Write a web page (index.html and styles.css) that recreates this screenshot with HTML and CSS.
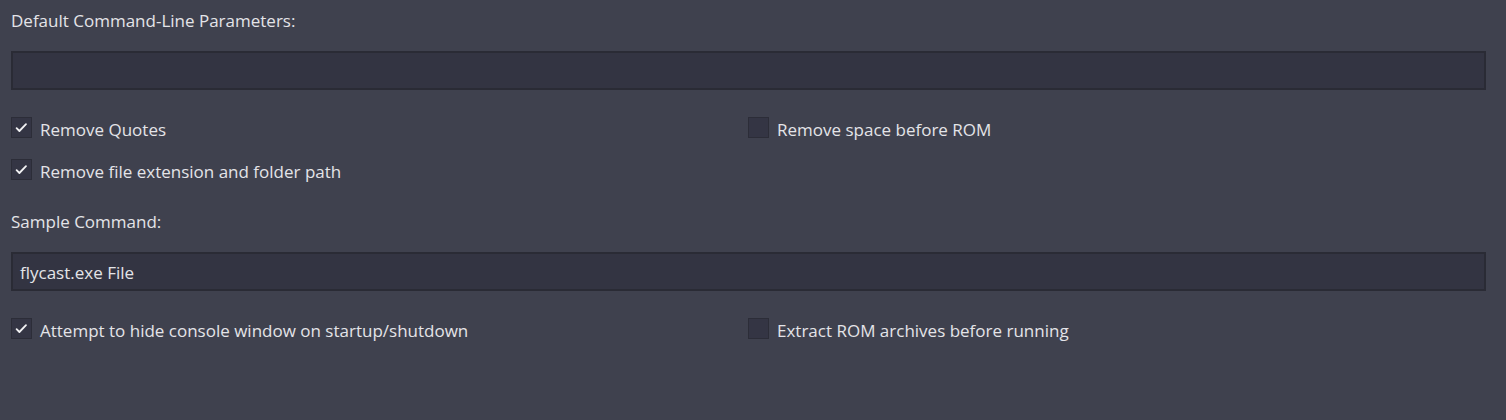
FILE: index.html
```html
<!DOCTYPE html>
<html>
<head>
<meta charset="utf-8">
<link rel="stylesheet" href="styles.css">
</head>
<body>
<div class="page">
  <div class="label">Default Command-Line Parameters:</div>
  <div class="input"></div>
  <div class="checks">
    <label class="check"><span class="box on"><svg viewBox="0 0 19 19"><path d="M4.6 10.2 L7.4 13 L14 6.2"/></svg></span><span class="txt">Remove Quotes</span></label>
    <label class="check"><span class="box"></span><span class="txt">Remove space before ROM</span></label>
    <label class="check"><span class="box on"><svg viewBox="0 0 19 19"><path d="M4.6 10.2 L7.4 13 L14 6.2"/></svg></span><span class="txt">Remove file extension and folder path</span></label>
  </div>
  <div class="label label2">Sample Command:</div>
  <div class="input">flycast.exe File</div>
  <div class="checks">
    <label class="check"><span class="box on"><svg viewBox="0 0 19 19"><path d="M4.6 10.2 L7.4 13 L14 6.2"/></svg></span><span class="txt">Attempt to hide console window on startup/shutdown</span></label>
    <label class="check"><span class="box"></span><span class="txt">Extract ROM archives before running</span></label>
  </div>
</div>
</body>
</html>
```
FILE: styles.css
```css
html, body {
  margin: 0;
  padding: 0;
  background: #3f414e;
  height: 100%;
}
body {
  font-family: "Open Sans", "Noto Sans", sans-serif;
  font-size: 17px;
  color: #e4e4e8;
}
.page {
  padding: 11px 20px 0 11px;
}
.label {
  height: 24px;
  line-height: 20px;
}
.input {
  margin-top: 16px;
  height: 34px;
  padding-top: 1px;
  border: 2px solid #2a2b35;
  background: #333442;
  line-height: 35px;
  padding-left: 7px;
  box-sizing: content-box;
}
.checks {
  display: grid;
  grid-template-columns: 737px 1fr;
  row-gap: 21px;
  margin-top: 27px;
}
.check {
  display: flex;
  align-items: center;
  height: 21px;
}
.box {
  flex: none;
  width: 19px;
  height: 19px;
  border: 1px solid #2c2d38;
  background: #343544;
  display: flex;
}
.box svg {
  width: 19px;
  height: 19px;
}
.box path {
  fill: none;
  stroke: #f2f2f4;
  stroke-width: 1.8;
  stroke-linecap: round;
  stroke-linejoin: round;
}
.txt {
  margin-left: 8px;
  padding-top: 4px;
}
.label2 {
  margin-top: 32px;
}
```
